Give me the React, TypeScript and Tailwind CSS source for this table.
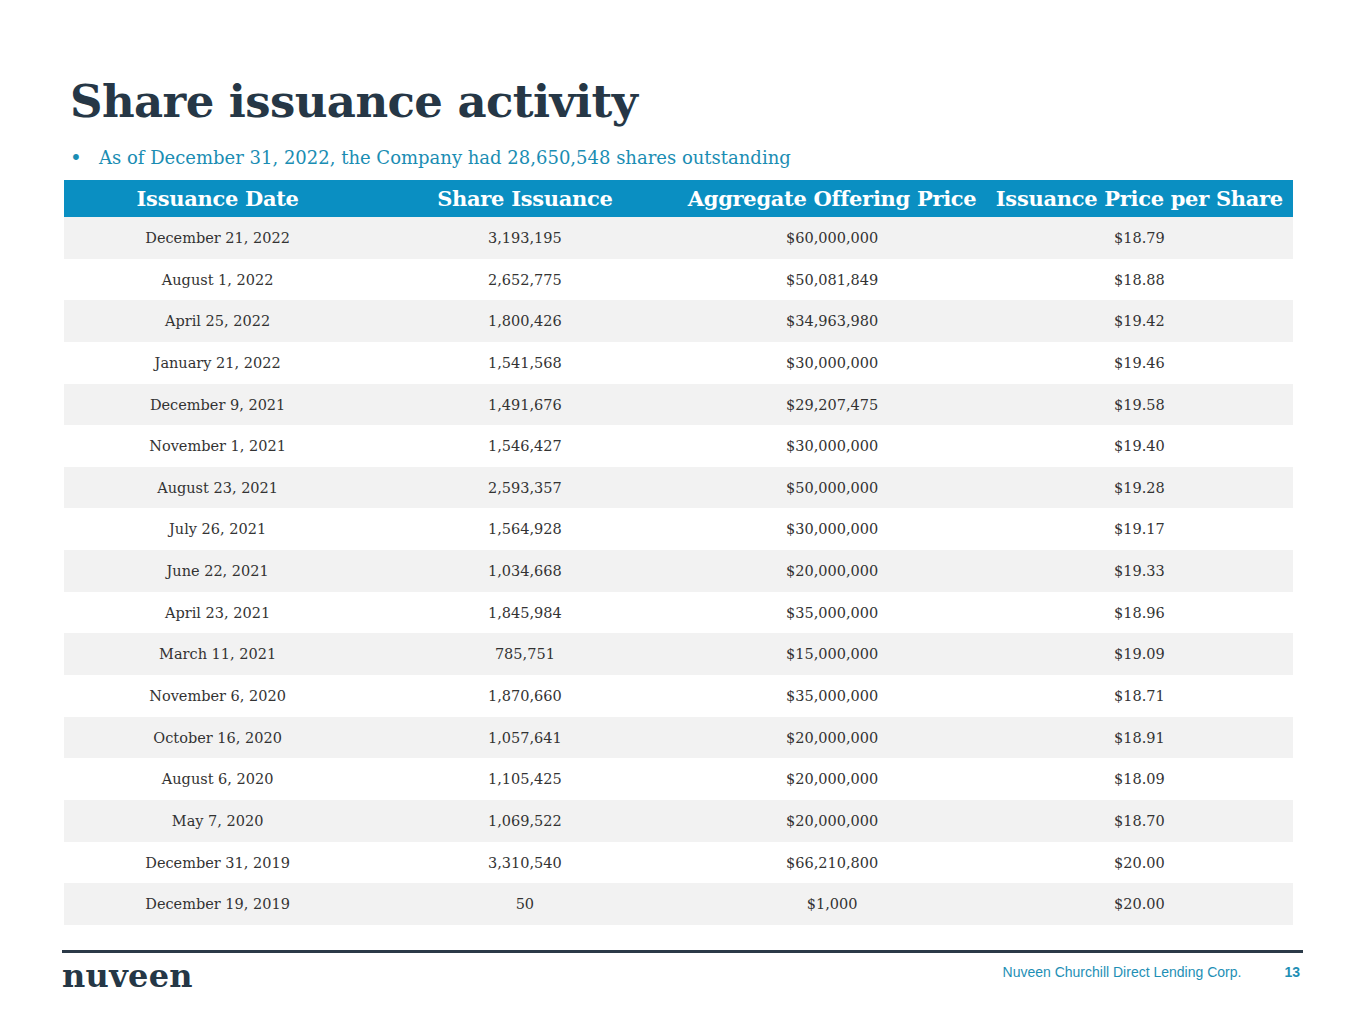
const rows = [
  ["December 21, 2022", "3,193,195", "$60,000,000", "$18.79"],
  ["August 1, 2022", "2,652,775", "$50,081,849", "$18.88"],
  ["April 25, 2022", "1,800,426", "$34,963,980", "$19.42"],
  ["January 21, 2022", "1,541,568", "$30,000,000", "$19.46"],
  ["December 9, 2021", "1,491,676", "$29,207,475", "$19.58"],
  ["November 1, 2021", "1,546,427", "$30,000,000", "$19.40"],
  ["August 23, 2021", "2,593,357", "$50,000,000", "$19.28"],
  ["July 26, 2021", "1,564,928", "$30,000,000", "$19.17"],
  ["June 22, 2021", "1,034,668", "$20,000,000", "$19.33"],
  ["April 23, 2021", "1,845,984", "$35,000,000", "$18.96"],
  ["March 11, 2021", "785,751", "$15,000,000", "$19.09"],
  ["November 6, 2020", "1,870,660", "$35,000,000", "$18.71"],
  ["October 16, 2020", "1,057,641", "$20,000,000", "$18.91"],
  ["August 6, 2020", "1,105,425", "$20,000,000", "$18.09"],
  ["May 7, 2020", "1,069,522", "$20,000,000", "$18.70"],
  ["December 31, 2019", "3,310,540", "$66,210,800", "$20.00"],
  ["December 19, 2019", "50", "$1,000", "$20.00"],
];

const headers = ["Issuance Date", "Share Issuance", "Aggregate Offering Price", "Issuance Price per Share"];

export default function App() {
  return (
    <div className="w-[1365px] h-[1024px] bg-white relative font-['DejaVu_Serif',serif]">
      <div className="pt-[74px] pl-[70px]">
        <h1 className="text-[45px] leading-[56px] font-bold text-[#263746] tracking-[-0.6px]">
          Share issuance activity
        </h1>
      </div>
      <div className="flex items-center pl-[70px] mt-[16px] text-[18px] leading-[24px] text-[#1a8db3]">
        <span className="w-[29px] text-[20px]">•</span>
        <span>As of December 31, 2022, the Company had 28,650,548 shares outstanding</span>
      </div>
      <div className="ml-[64px] mt-[10px] w-[1229px]">
        <div className="grid grid-cols-4 h-[37px] bg-[#0a8fc2] text-white font-bold text-[21px] tracking-[-0.3px] items-center">
          {headers.map((h) => (
            <div key={h} className="text-center whitespace-nowrap">{h}</div>
          ))}
        </div>
        {rows.map((r, i) => (
          <div
            key={i}
            className={`grid grid-cols-4 h-[41.65px] items-center text-[14.5px] text-[#333333] ${
              i % 2 === 0 ? "bg-[#f2f2f2]" : "bg-white"
            }`}
          >
            {r.map((c, j) => (
              <div key={j} className="text-center pt-[2px]">{c}</div>
            ))}
          </div>
        ))}
      </div>
      <div className="ml-[62px] mt-[25px] w-[1241px] h-[3px] bg-[#2b3a48]" />
      <div className="flex items-start justify-between ml-[62px] w-[1238px] mt-[6px]">
        <div className="text-[32px] leading-[34px] font-bold text-[#253746] tracking-[0.3px]">nuveen</div>
        <div className="flex items-center gap-[43px] mt-[3px] font-['Liberation_Sans',sans-serif] text-[14px] text-[#1e8fb5]">
          <span>Nuveen Churchill Direct Lending Corp.</span>
          <span className="font-bold">13</span>
        </div>
      </div>
    </div>
  );
}
